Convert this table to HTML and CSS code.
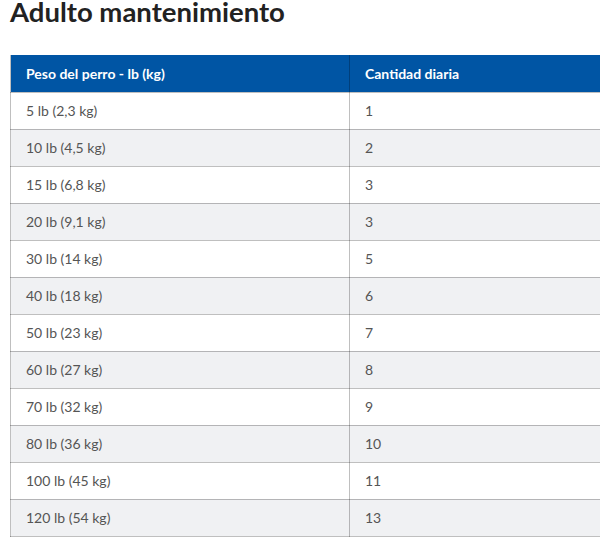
FILE: index.html
```html
<!DOCTYPE html>
<html lang="es">
<head>
<meta charset="utf-8">
<link rel="stylesheet" href="styles.css">
</head>
<body>
<h2 class="title">Adulto mantenimiento</h2>
<table class="feed">
  <thead>
    <tr><th class="c1">Peso del perro - lb (kg)</th><th>Cantidad diaria</th></tr>
  </thead>
  <tbody>
    <tr><td>5 lb (2,3 kg)</td><td>1</td></tr>
    <tr><td>10 lb (4,5 kg)</td><td>2</td></tr>
    <tr><td>15 lb (6,8 kg)</td><td>3</td></tr>
    <tr><td>20 lb (9,1 kg)</td><td>3</td></tr>
    <tr><td>30 lb (14 kg)</td><td>5</td></tr>
    <tr><td>40 lb (18 kg)</td><td>6</td></tr>
    <tr><td>50 lb (23 kg)</td><td>7</td></tr>
    <tr><td>60 lb (27 kg)</td><td>8</td></tr>
    <tr><td>70 lb (32 kg)</td><td>9</td></tr>
    <tr><td>80 lb (36 kg)</td><td>10</td></tr>
    <tr><td>100 lb (45 kg)</td><td>11</td></tr>
    <tr><td>120 lb (54 kg)</td><td>13</td></tr>
  </tbody>
</table>
</body>
</html>
```
FILE: styles.css
```css
html, body {
  margin: 0;
  padding: 0;
  background: #fff;
  overflow: hidden;
}
body {
  padding: 0 0 0 10px;
  font-family: Lato, "Open Sans", sans-serif;
}
.title {
  margin: 0;
  font-size: 27.5px;
  line-height: 24px;
  font-weight: 700;
  color: #222;
  padding-top: 0;
  height: 55px;
}
.feed {
  border-collapse: collapse;
  width: 590px;
  table-layout: fixed;
}
.feed .c1 {
  width: 339px;
}
.feed th, .feed td {
  text-align: left;
  padding: 0 16px 0 15px;
  height: 36px;
  box-sizing: border-box;
  border: 1px solid rgba(0,0,0,0.25);
  border-top: none;
  font-size: 14px;
}
.feed th:last-child, .feed td:last-child {
  border-right: none;
}
.feed th {
  background: #0055a4;
  color: #fff;
  font-weight: 700;
  height: 37px;
}
.feed td {
  color: #555;
  height: 37px;
}
.feed tbody tr:nth-child(even) td {
  background: #f0f1f3;
}
```
